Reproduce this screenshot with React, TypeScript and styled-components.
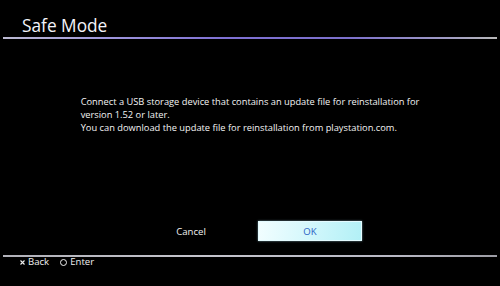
import React from "react";
import styled, { createGlobalStyle } from "styled-components";

const Global = createGlobalStyle`
  html, body { margin: 0; padding: 0; background: #000; }
  body { font-family: "Open Sans", "Noto Sans", sans-serif; color: #f2f2f2; }
  * { box-sizing: border-box; }
`;

const Screen = styled.div`
  width: 500px;
  height: 286px;
  background: #000;
  display: flex;
  flex-direction: column;
  overflow: hidden;
`;

const Header = styled.header`
  padding: 16px 0 0 22px;
`;

const Title = styled.h1`
  margin: 0;
  font-size: 17.3px;
  line-height: 20px;
  font-weight: 400;
  color: #f4f4fa;
`;

const Rule = styled.div<{ $top: number; $variant: "title" | "footer" }>`
  height: 2px;
  margin: ${(p) => p.$top}px 3px 0 3px;
  background: ${(p) =>
    p.$variant === "title"
      ? "linear-gradient(90deg, #bcbad2 0%, #a098dc 20%, #7e70d4 45%, #7c70cc 70%, #a09cc4 90%, #b8b8b8 100%)"
      : "linear-gradient(90deg, #b0b0b8 0%, #c4c4cc 40%, #b8b8c4 80%, #9c9ca4 100%)"};
`;

const Message = styled.div`
  margin: 56px auto 0 auto;
  width: fit-content;
  font-size: 9.3px;
  font-weight: 500;
  line-height: 13px;
  color: #f4f4f4;
`;

const Line = styled.span`
  display: block;
  white-space: nowrap;
`;

const Buttons = styled.div`
  margin-top: 87px;
  display: flex;
  justify-content: center;
  gap: 15px;
  padding-left: 1px;
`;

const Button = styled.div<{ $focused?: boolean }>`
  width: 104px;
  height: 20px;
  display: flex;
  align-items: center;
  justify-content: center;
  font-size: 9.6px;
  font-weight: 500;
  color: ${(p) => (p.$focused ? "#2a64c4" : "#f0f0f0")};
  background: ${(p) =>
    p.$focused
      ? "linear-gradient(100deg, #f2feff 0%, #d6f8fc 45%, #b2f0f6 100%)"
      : "transparent"};
  border: 1px solid ${(p) => (p.$focused ? "#e4fbff" : "transparent")};
  box-shadow: ${(p) => (p.$focused ? "0 0 2px rgba(180, 240, 255, 0.6)" : "none")};
`;

const Footer = styled.footer`
  display: flex;
  align-items: center;
  gap: 11px;
  padding-left: 20px;
  height: 12px;
  margin-top: -1px;
  font-size: 9.6px;
  font-weight: 500;
  line-height: 12px;
  color: #f0f0f0;
`;

const Hint = styled.span`
  display: inline-flex;
  align-items: center;
  gap: 3px;
`;

const Ring = styled.span`
  display: inline-block;
  width: 7px;
  height: 7px;
  border: 1.3px solid #f0f0f0;
  border-radius: 50%;
`;

const Cross = () => (
  <svg width="5" height="5" viewBox="0 0 5 5">
    <path d="M0.5 0.5 L4.5 4.5 M4.5 0.5 L0.5 4.5" stroke="#f0f0f0" strokeWidth="1.1" />
  </svg>
);

export default function App() {
  return (
    <>
      <Global />
      <Screen>
        <Header>
          <Title>Safe Mode</Title>
        </Header>
        <Rule $top={1} $variant="title" />
        <Message>
          <Line>Connect a USB storage device that contains an update file for reinstallation for</Line>
          <Line>version 1.52 or later.</Line>
          <Line>You can download the update file for reinstallation from playstation.com.</Line>
        </Message>
        <Buttons>
          <Button>Cancel</Button>
          <Button $focused>OK</Button>
        </Buttons>
        <Rule $top={14} $variant="footer" />
        <Footer>
          <Hint>
            <Cross />
            Back
          </Hint>
          <Hint>
            <Ring />
            Enter
          </Hint>
        </Footer>
      </Screen>
    </>
  );
}
